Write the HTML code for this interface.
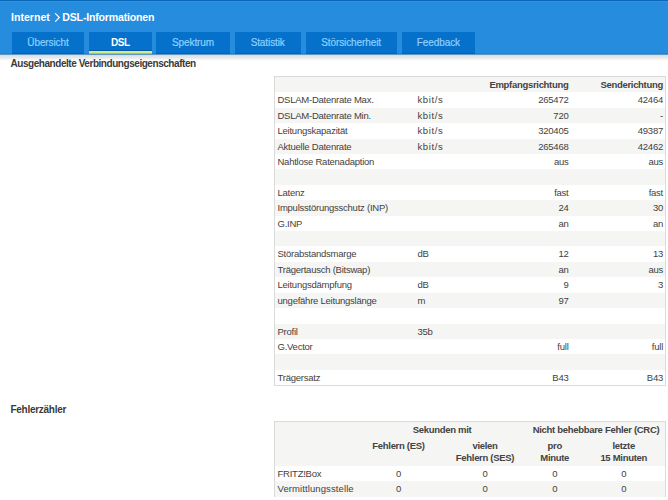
<!DOCTYPE html>
<html><head><meta charset="utf-8">
<style>
*{box-sizing:border-box;margin:0;padding:0}
html,body{width:668px;height:500px;overflow:hidden;background:#fff}
body{position:relative;font-family:"Liberation Sans",sans-serif;color:#3f3f3f;font-size:9.5px}
#hdr{position:absolute;left:0;top:0;width:668px;height:54px;background:#268cdd;}
#hdr .topline{position:absolute;left:0;top:0;width:668px;height:2px;background:linear-gradient(#0a68bb 0,#0a68bb 1px,#2c93e5 1px)}
#hdr .botline{position:absolute;left:0;top:53px;width:668px;height:1px;background:#2a80c8}
#shadow{position:absolute;left:0;top:54px;width:668px;height:7px;background:linear-gradient(to bottom,#5f96c6 0,#5f96c6 1px,#cce3f7 1px,#cce3f7 2px,#dfe5e8 2px,#dfe5e8 3px,#e7e7e4 3px,#e7e7e4 4px,#eeeeec 4px,#eeeeec 5px,#f6f6f5 5px,#f6f6f5 6px,#fcfcfc 6px)}
.title{position:absolute;top:9px;color:#fff;font-weight:bold;font-size:10.6px;line-height:16px;white-space:nowrap;letter-spacing:-0.15px}
.title svg{position:absolute;top:4px}
.tab{position:absolute;top:32px;height:22px;background:#0671cb;color:#8dd0ff;font-size:10px;line-height:22px;text-align:center;white-space:nowrap;letter-spacing:-0.1px;-webkit-text-stroke:0.2px #8dd0ff;box-shadow:inset 0 -1px #0862b4}
.tab.act{color:#fff;font-weight:bold;letter-spacing:-0.5px;-webkit-text-stroke:0}
.tab.act:after{content:"";position:absolute;left:0;right:0;bottom:0;height:4px;background:linear-gradient(#0b5ca6 0,#0b5ca6 1px,#cdee82 1px,#cdee82 3px,#a9c45e 3px)}
.sec{position:absolute;left:10.5px;font-weight:bold;font-size:10px;line-height:12px;color:#3a3a3a;white-space:nowrap;letter-spacing:-0.45px}
.tbl{position:absolute;left:274px;width:392px;border:1px solid #dadada;background:#fff}
.row{position:relative;height:15.42px;line-height:15.42px;white-space:nowrap;letter-spacing:-0.24px}
.row.g{background:#f5f5f3}
.row span{position:absolute;top:0}
.b{font-weight:bold;letter-spacing:-0.3px;color:#434343}
.c1{left:2.5px}
.c2{left:142.5px}
.k{letter-spacing:0.6px}
.c3{right:96.5px;text-align:right}
.c4{right:2px;text-align:right}
.t2 .cc{position:absolute;text-align:center;white-space:nowrap}
</style></head><body>
<div id="hdr"><div class="topline"></div><div class="botline"></div>
<div class="title" style="left:11px;letter-spacing:0px">Internet</div><svg style="position:absolute;left:54px;top:13px" width="7" height="9" viewBox="0 0 7 9"><polyline points="1.2,0.3 5.4,4.5 1.2,8.7" fill="none" stroke="#fff" stroke-width="1.1"/></svg><div class="title" style="left:62.3px;letter-spacing:-0.2px">DSL-Informationen</div>
<div class="tab" style="left:12px;width:72px">Übersicht</div>
<div class="tab act" style="left:89px;width:62.5px">DSL</div>
<div class="tab" style="left:156px;width:74px">Spektrum</div>
<div class="tab" style="left:234.7px;width:66px">Statistik</div>
<div class="tab" style="left:305.6px;width:91px">Störsicherheit</div>
<div class="tab" style="left:402.2px;width:72.4px">Feedback</div>
</div>

<div id="shadow"></div>
<div class="sec" style="top:58px">Ausgehandelte Verbindungseigenschaften</div>

<div class="tbl" style="top:76px;height:309.5px">
<div class="row g b"><span class="c3">Empfangsrichtung</span><span class="c4">Senderichtung</span></div>
<div class="row"><span class="c1">DSLAM-Datenrate Max.</span><span class="c2 k">kbit/s</span><span class="c3">265472</span><span class="c4">42464</span></div>
<div class="row g"><span class="c1">DSLAM-Datenrate Min.</span><span class="c2 k">kbit/s</span><span class="c3">720</span><span class="c4">-</span></div>
<div class="row"><span class="c1">Leitungskapazität</span><span class="c2 k">kbit/s</span><span class="c3">320405</span><span class="c4">49387</span></div>
<div class="row g"><span class="c1">Aktuelle Datenrate</span><span class="c2 k">kbit/s</span><span class="c3">265468</span><span class="c4">42462</span></div>
<div class="row"><span class="c1">Nahtlose Ratenadaption</span><span class="c3">aus</span><span class="c4">aus</span></div>
<div class="row g"></div>
<div class="row"><span class="c1">Latenz</span><span class="c3">fast</span><span class="c4">fast</span></div>
<div class="row g"><span class="c1">Impulsstörungsschutz (INP)</span><span class="c3">24</span><span class="c4">30</span></div>
<div class="row"><span class="c1">G.INP</span><span class="c3">an</span><span class="c4">an</span></div>
<div class="row g"></div>
<div class="row"><span class="c1">Störabstandsmarge</span><span class="c2">dB</span><span class="c3">12</span><span class="c4">13</span></div>
<div class="row g"><span class="c1">Trägertausch (Bitswap)</span><span class="c3">an</span><span class="c4">aus</span></div>
<div class="row"><span class="c1">Leitungsdämpfung</span><span class="c2">dB</span><span class="c3">9</span><span class="c4">3</span></div>
<div class="row g"><span class="c1">ungefähre Leitungslänge</span><span class="c2">m</span><span class="c3">97</span></div>
<div class="row"></div>
<div class="row g"><span class="c1">Profil</span><span class="c2">35b</span></div>
<div class="row"><span class="c1">G.Vector</span><span class="c3">full</span><span class="c4">full</span></div>
<div class="row g"></div>
<div class="row"><span class="c1">Trägersatz</span><span class="c3">B43</span><span class="c4">B43</span></div>
</div>

<div class="sec" style="top:403.5px;letter-spacing:-0.28px">Fehlerzähler</div>

<div class="tbl t2" style="top:421px;height:76px">
<div class="row g b" style="height:43.7px">
 <span class="cc" style="left:81px;width:172px;top:0">Sekunden mit</span>
 <span class="cc" style="left:252px;width:138px;top:0">Nicht behebbare Fehler (CRC)</span>
 <span class="cc" style="left:79px;width:89px;top:16px">Fehlern (ES)</span>
 <span class="cc" style="left:168px;width:84px;top:17.6px;line-height:12.6px">vielen<br>Fehlern (SES)</span>
 <span class="cc" style="left:251.2px;width:57px;top:17.6px;line-height:12.6px">pro<br>Minute</span>
 <span class="cc" style="left:308.2px;width:81px;top:17.6px;line-height:12.6px">letzte<br>15 Minuten</span>
</div>
<div class="row"><span class="c1">FRITZ!Box</span><span class="cc" style="left:79px;width:89px">0</span><span class="cc" style="left:168px;width:84px">0</span><span class="cc" style="left:251.2px;width:57px">0</span><span class="cc" style="left:308.2px;width:81px">0</span></div>
<div class="row g"><span class="c1" style="letter-spacing:0.1px">Vermittlungsstelle</span><span class="cc" style="left:79px;width:89px">0</span><span class="cc" style="left:168px;width:84px">0</span><span class="cc" style="left:251.2px;width:57px">0</span><span class="cc" style="left:308.2px;width:81px">0</span></div>
</div>
</body></html>
